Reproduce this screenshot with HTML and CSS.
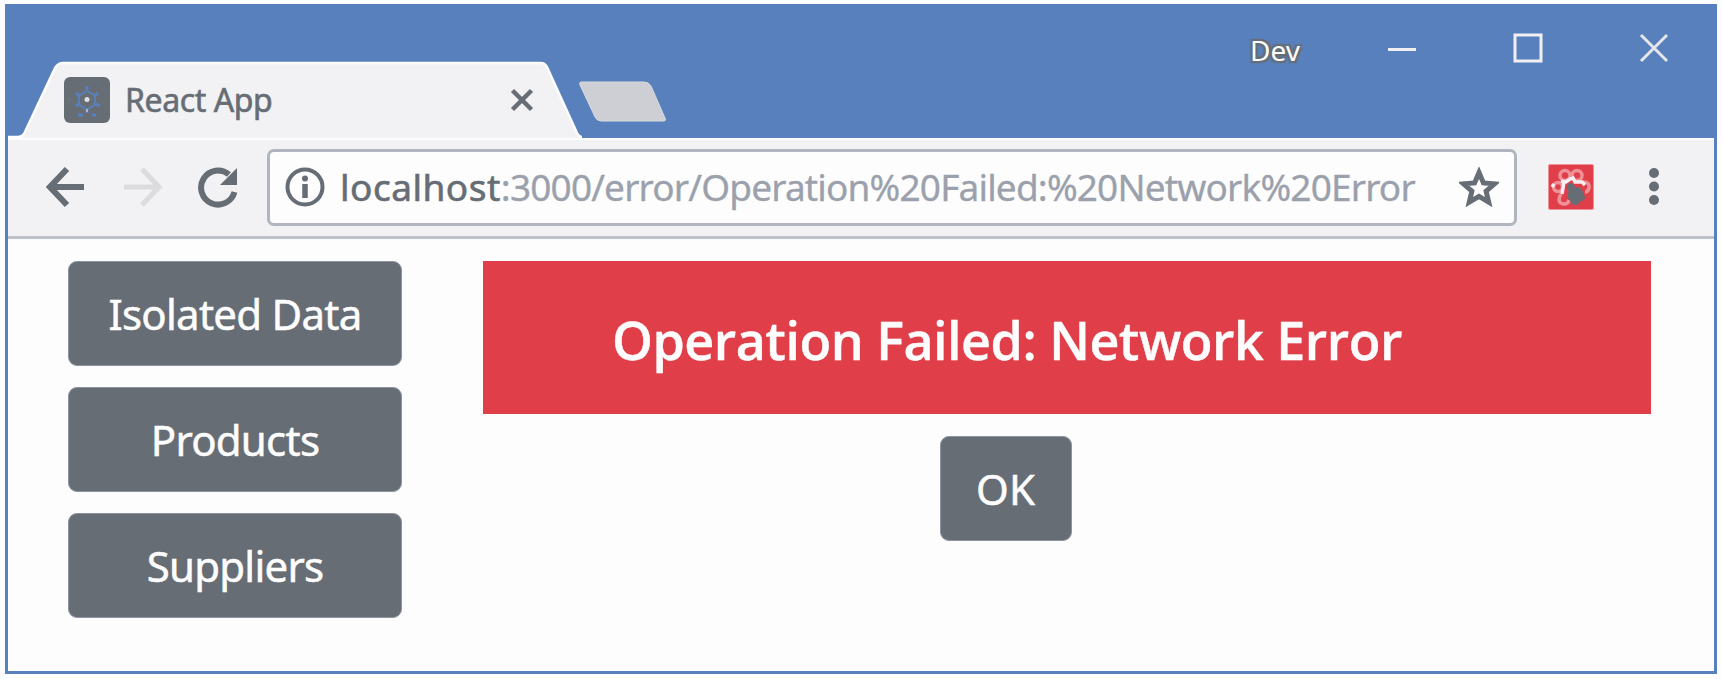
FILE: index.html
```html
<!DOCTYPE html>
<html lang="en">
<head>
<meta charset="utf-8">
<title>React App</title>
<link rel="stylesheet" href="styles.css">
</head>
<body>
<div class="window">
  <header class="titlebar">
    <div class="tab">
      <svg class="tab-shape" width="580" height="77" viewBox="0 0 580 77"><path d="M0 77V76H10Q14 76 16 73L47 7Q50 2 55 2H533Q537 2 539 6L569 72Q571 76 574 76V77Z" fill="#f2f1f3"/><path d="M0 76H10Q14 76 16 73L47 7Q50 2 55 2H533Q537 2 539 6L569 72Q571 76 574 76" fill="none" stroke="#fdfdfd" stroke-width="2.500"/></svg>
      <svg class="favicon" width="46" height="46" viewBox="0 0 46 46"><rect width="46" height="46" rx="6" fill="#666d75"/><g fill="none" stroke="#5880bc" stroke-width="1.800"><path d="M23 14l8 4.500v9.500l-8 4.500-8-4.500v-9.500z"/><path d="M23 9v4M12 16l4 3M34 16l-4 3M12 29l4-3M36 29l-6-3M23 32v4M14 38h5M28 38h4M5 22h1" stroke-width="3"/></g><circle cx="23" cy="22.500" r="2.500" fill="#e0e0e4"/><path d="M23 32v3" stroke="#b0b5c0" stroke-width="2"/></svg>
      <span class="tab-title">React App</span>
      <svg class="tab-close" width="24" height="24" viewBox="0 0 24 24"><path d="M2.500 2.500l19 19M21.500 2.500l-19 19" stroke="#666d75" stroke-width="4.500"/></svg>
    </div>
    <svg class="new-tab" width="88" height="42" viewBox="0 0 88 42"><path d="M2 1H65Q70 1 72 5L86 37Q88 40 84 40H22Q18 40 16 36L1 4Q0 1 2 1Z" fill="#cdcfd5" stroke="#d9d9dd"/></svg>
    <div class="controls">
      <span class="profile">Dev</span>
      <svg width="28" height="30" viewBox="0 0 28 30"><path d="M0 16.500h28" stroke="#f0eff1" stroke-width="3"/></svg>
      <svg width="30" height="30" viewBox="0 0 30 30"><rect x="2" y="2" width="26" height="26" fill="none" stroke="#f0eff1" stroke-width="3"/></svg>
      <svg width="30" height="30" viewBox="0 0 30 30"><path d="M2 2l26 26M28 2L2 28" stroke="#e6e6ea" stroke-width="3"/></svg>
    </div>
  </header>
  <nav class="toolbar">
    <svg class="back" width="40" height="42" viewBox="0 0 40 42"><path d="M38 21H5M21 3L4 21l17 18" fill="none" stroke="#666d75" stroke-width="6"/></svg>
    <svg class="forward" width="40" height="42" viewBox="0 0 40 42"><path d="M1 21h34M19 3l17 18-17 18" fill="none" stroke="#dcdbde" stroke-width="5"/></svg>
    <svg class="reload" width="42" height="42" viewBox="0 0 42 42"><path d="M37.500 26A17 17 0 1 1 32 8.500" fill="none" stroke="#666d75" stroke-width="6"/><path d="M40 2v17H23z" fill="#666d75"/></svg>
    <div class="address">
      <svg class="info" width="40" height="40" viewBox="0 0 40 40"><circle cx="20" cy="20" r="17.500" fill="none" stroke="#666d75" stroke-width="4"/><path d="M20 17v14" stroke="#666d75" stroke-width="5.500"/><circle cx="20" cy="11.500" r="3" fill="#666d75"/></svg>
      <span class="url"><span class="host">localhost</span>:3000/error/Operation%20Failed:%20Network%20Error</span>
      <svg class="star" width="40" height="40" viewBox="0 0 40 40"><path d="M20 5.500l4.400 10.400 11.200.9-8.500 7.300 2.600 11-9.700-5.800-9.700 5.800 2.600-11-8.500-7.300 11.200-.9z" fill="none" stroke="#666d75" stroke-width="5"/></svg>
    </div>
    <svg class="extension" width="46" height="46" viewBox="0 0 46 46"><rect x=".5" y=".5" width="45" height="45" rx="1.500" fill="#e03f4a" stroke="#ef9298"/><g fill="none" stroke="#ef9298" stroke-width="3.500"><circle cx="17" cy="11.500" r="5"/><circle cx="29" cy="11.500" r="5"/><circle cx="10" cy="23" r="4.500"/><path d="M35 18q7 0 6 6-1 4-4 4M13 30q-5 9 3 10 4 0 5-4"/></g><path d="M13 17l5 1 4-3 3-1 2 4 7 0 3 3M16 18l-2 12M6 20l-2 3" fill="none" stroke="#f6eef0" stroke-width="3.500"/><path d="M19 21q3-4 7 0l2 3q4-2 6 2l3 7q0 4-4 4l-4 4q-4 1-6-3l-4-5q0-4 2-5-3-3-2-7z" fill="#666d75"/></svg>
    <svg class="menu" width="12" height="42" viewBox="0 0 12 42"><g fill="#666d75"><circle cx="6" cy="7" r="5"/><circle cx="6" cy="20.500" r="5"/><circle cx="6" cy="34" r="5"/></g></svg>
  </nav>
  <main class="page">
    <div class="sidebar">
      <button class="btn">Isolated Data</button>
      <button class="btn">Products</button>
      <button class="btn">Suppliers</button>
    </div>
    <section class="content">
      <h1 class="alert">Operation Failed: Network Error</h1>
      <button class="btn ok">OK</button>
    </section>
  </main>
</div>
</body>
</html>
```
FILE: styles.css
```css
* { box-sizing: border-box; }
html, body { margin: 0; background: #fdfdfd; }
body {
  padding: 4px 5px 5px;
  height: 679px;
  overflow: hidden;
  font-family: "Noto Sans", "Open Sans", sans-serif;
  color: #666d75;
}
svg { display: block; flex: none; }
.window {
  width: 1712px;
  height: 670px;
  border: 3px solid #5880bc;
  border-top: 0;
  background: #fdfdfd;
}
.titlebar {
  height: 134px;
  background: #5880bc;
  display: flex;
  align-items: flex-start;
}
.tab {
  position: relative;
  margin-top: 57px;
  width: 576px;
  height: 77px;
  display: flex;
  align-items: center;
  padding: 0 0 0 56px;
}
.tab-shape { position: absolute; left: 0; top: 0; overflow: visible; }
.favicon, .tab-title, .tab-close { position: relative; }
.tab-title {
  margin-left: 15px;
  width: 385px;
  font-size: 32px;
  line-height: 40px;
  letter-spacing: -0.4px;
  -webkit-text-stroke: 0.6px #666d75;
  white-space: nowrap;
}
.new-tab { margin: 77px 0 0 -5px; }
.controls {
  margin: 29px 44px 0 auto;
  display: flex;
  align-items: flex-start;
}
.profile {
  font-size: 28px;
  line-height: 34px;
  margin-right: 88px;
  color: #fdfdfd;
  text-shadow: -2px -2px 1px #666d75, 2px -2px 1px #666d75, -2px 2px 1px #666d75, 2px 2px 1px #666d75;
}
.controls svg + svg { margin-left: 97px; }
.controls svg:last-child { margin-left: 96px; margin-right: 1px; }
.toolbar {
  height: 101px;
  background: #f2f1f3;
  border-top: 2px solid #fdfdfd;
  border-bottom: 3px solid #bcc1ca;
  display: flex;
  align-items: center;
  padding: 0 0 2px 38px;
}
.forward { margin-left: 37px; }
.reload { margin-left: 34px; }
.address {
  margin-left: 28px;
  width: 1250px;
  height: 77px;
  border: 3px solid #b0b5c0;
  border-radius: 7px;
  background: #fdfdfd;
  display: flex;
  align-items: center;
  padding: 0 15px;
}
.url {
  margin-left: 15px;
  flex: 1;
  font-size: 37px;
  line-height: 50px;
  letter-spacing: -0.84px;
  color: #9ba1ac;
  -webkit-text-stroke: 0.3px #9ba1ac;
  white-space: nowrap;
}
.host {
  letter-spacing: 0.5px;
  color: #666d75;
  -webkit-text-stroke: 0.6px #666d75;
}
.extension { margin-left: 31px; }
.menu { margin-left: 54px; }
.page { display: flex; padding: 22px 0 0 60px; }
.sidebar { display: flex; flex-direction: column; gap: 21px; width: 334px; }
.btn {
  height: 105px;
  border: 1px solid #8f95a0;
  border-radius: 9px;
  background: #666d75;
  color: #fdfdfd;
  font: 400 42px/56px "Noto Sans", "Open Sans", sans-serif;
  letter-spacing: -0.75px;
  -webkit-text-stroke: 0.5px #fdfdfd;
  padding: 1px 0 0;
  white-space: nowrap;
}
.content { margin-left: 81px; width: 1168px; display: flex; flex-direction: column; align-items: center; }
.alert {
  margin: 0;
  width: 100%;
  height: 153px;
  padding: 0 0 0 129px;
  background: #e03f4a;
  color: #fdfdfd;
  font: 600 52px/158px "Open Sans", "Noto Sans", sans-serif;
  letter-spacing: -0.5px;
  -webkit-text-stroke: 0.4px #fdfdfd;
  white-space: nowrap;
}
.ok { margin: 22px 0 0 -123px; width: 132px; letter-spacing: 0; }
```
